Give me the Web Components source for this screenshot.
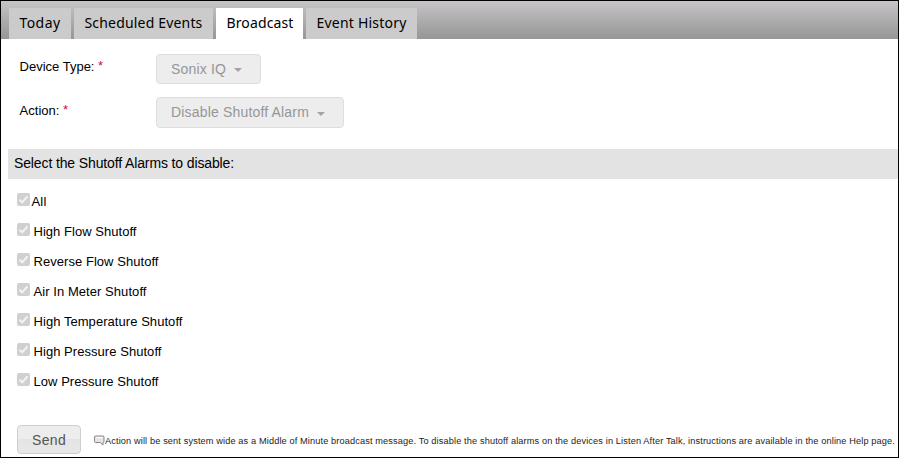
<!DOCTYPE html>
<html lang="en"><head><meta charset="utf-8"><title>Broadcast</title>
<style>
html,body{margin:0;background:#fff}
body{width:899px;height:458px;overflow:hidden;font-family:"Liberation Sans",Arial,sans-serif;color:#000}
</style></head><body>
<broadcast-page></broadcast-page>
<script>
const define=(name,html,init)=>customElements.define(name,class extends HTMLElement{
  connectedCallback(){
    if(this.shadowRoot)return;
    this.attachShadow({mode:'open'}).innerHTML=html;
    if(init)init.call(this,this.shadowRoot);
  }
});
/* Line of text whose tracking is adjusted to fill the given width */
define('fit-text',`<style>:host{display:block;white-space:nowrap;line-height:inherit}span{display:inline-block}</style><span><slot></slot></span>`,function(r){
  const s=r.querySelector('span'),w=+this.getAttribute('w');
  this.style.width=w+'px';
  const n=this.textContent.length,cur=s.getBoundingClientRect().width;
  s.style.letterSpacing=((w-cur)/n)+'px';
});
define('tab-item',`<style>:host{display:block;box-sizing:border-box;height:31px;padding:0 0 0 10.5px;background:#cbcbcb;font:14px/30px "Noto Sans","Open Sans",sans-serif}:host([active]){background:#fff}</style><slot></slot>`);
define('tab-bar',`<style>:host{display:flex;gap:3px;height:38px;box-sizing:border-box;padding:7px 0 0 8px;background:linear-gradient(#c6c4c6,#969696)}</style><slot></slot>`);
define('form-row',`<style>:host{display:flex;height:31px}.l{display:flex;width:136.5px;font-size:13px;line-height:25px;padding-left:18.5px;gap:3.5px;box-sizing:content-box}:host([low]) .l{padding-top:1px}b{font-weight:400;color:#d01030;line-height:23px}</style><div class="l"><slot name="label"></slot><b>*</b></div><slot></slot>`);
define('drop-button',`<style>:host{display:flex;align-items:center;box-sizing:border-box;border:1px solid #dedede;border-radius:4px;background:#ededed;color:#969696;font-size:14px;padding:0 0 1px 14px;gap:8px}svg{display:block;margin-top:3px}</style><slot></slot><svg width="8" height="4"><path d="M0 0H8L4 4Z" fill="#a3a3a3"/></svg>`);
define('section-title',`<style>:host{display:block;height:30px;margin-left:7px;padding-left:6px;background:#e3e3e3;font-size:14px;line-height:28px}</style><slot></slot>`);
define('check-item',`<style>:host{display:flex;height:30px;gap:3.5px;font-size:13px;line-height:17px}:host([tight]){gap:1.5px}svg{display:block;flex:none}</style><svg width="13" height="13"><rect width="13" height="13" rx="2" fill="#d0d0d0"/><path d="M2.5 6.8L5.2 9.4L10.5 3.3" fill="none" stroke="#f4f4f4" stroke-width="2"/></svg><slot></slot>`);
define('send-button',`<style>:host{display:block;box-sizing:border-box;width:64px;height:29px;border:1px solid #cecece;border-radius:4px;background:linear-gradient(#ededed 0 50%,#e4e4e4 50%,#e8e8e8);color:#555;font-size:14px;line-height:28px;padding-left:14px}</style><slot></slot>`);
define('note-line',`<style>:host{display:flex;font-size:9.2px;line-height:13px;color:#222}svg{display:block}</style><svg width="11" height="11" viewBox="0 0 11 11"><path d="M1.5 1H9Q10 1 10 2V6.5Q10 7.5 9 7.5V10L6.2 7.5H1.5Q.5 7.5 .5 6.5V2Q.5 1 1.5 1Z" fill="#e4e4e4" stroke="#858585"/><path d="M2 2.5H8.5" stroke="#fff"/></svg><slot></slot>`);
define('broadcast-page',`<style>
:host{display:flex;flex-direction:column;box-sizing:border-box;width:899px;height:458px;border:1px solid #000;background:#fff}
.form{display:flex;flex-direction:column;gap:13px;padding-top:15px;height:95px}
.checks{padding:14px 0 0 16px;height:232px}
.foot{display:flex;gap:13px;padding:0 0 0 16px;height:32px}
note-line{padding-top:10px}
.checks,.form,.foot{box-sizing:content-box;flex:none}
</style>
<tab-bar>
<tab-item style="width:62px"><fit-text w="41">Today</fit-text></tab-item>
<tab-item style="width:139px"><fit-text w="118">Scheduled Events</fit-text></tab-item>
<tab-item active style="width:87px"><fit-text w="67">Broadcast</fit-text></tab-item>
<tab-item style="width:111px"><fit-text w="90">Event History</fit-text></tab-item>
</tab-bar>
<div class="form">
<form-row style="height:30px"><fit-text slot="label" w="75">Device Type:</fit-text><drop-button style="width:105px"><fit-text w="55">Sonix IQ</fit-text></drop-button></form-row>
<form-row low><fit-text slot="label" w="40">Action:</fit-text><drop-button style="width:188px"><fit-text w="138">Disable Shutoff Alarm</fit-text></drop-button></form-row>
</div>
<section-title><fit-text w="220">Select the Shutoff Alarms to disable:</fit-text></section-title>
<div class="checks">
<check-item tight><fit-text w="15">All</fit-text></check-item>
<check-item><fit-text w="103">High Flow Shutoff</fit-text></check-item>
<check-item><fit-text w="125">Reverse Flow Shutoff</fit-text></check-item>
<check-item><fit-text w="113">Air In Meter Shutoff</fit-text></check-item>
<check-item><fit-text w="149">High Temperature Shutoff</fit-text></check-item>
<check-item><fit-text w="128">High Pressure Shutoff</fit-text></check-item>
<check-item><fit-text w="125">Low Pressure Shutoff</fit-text></check-item>
</div>
<div class="foot"><send-button><fit-text w="34">Send</fit-text></send-button><note-line><fit-text w="790">Action will be sent system wide as a Middle of Minute broadcast message. To disable the shutoff alarms on the devices in Listen After Talk, instructions are available in the online Help page.</fit-text></note-line></div>`);
</script></body></html>
